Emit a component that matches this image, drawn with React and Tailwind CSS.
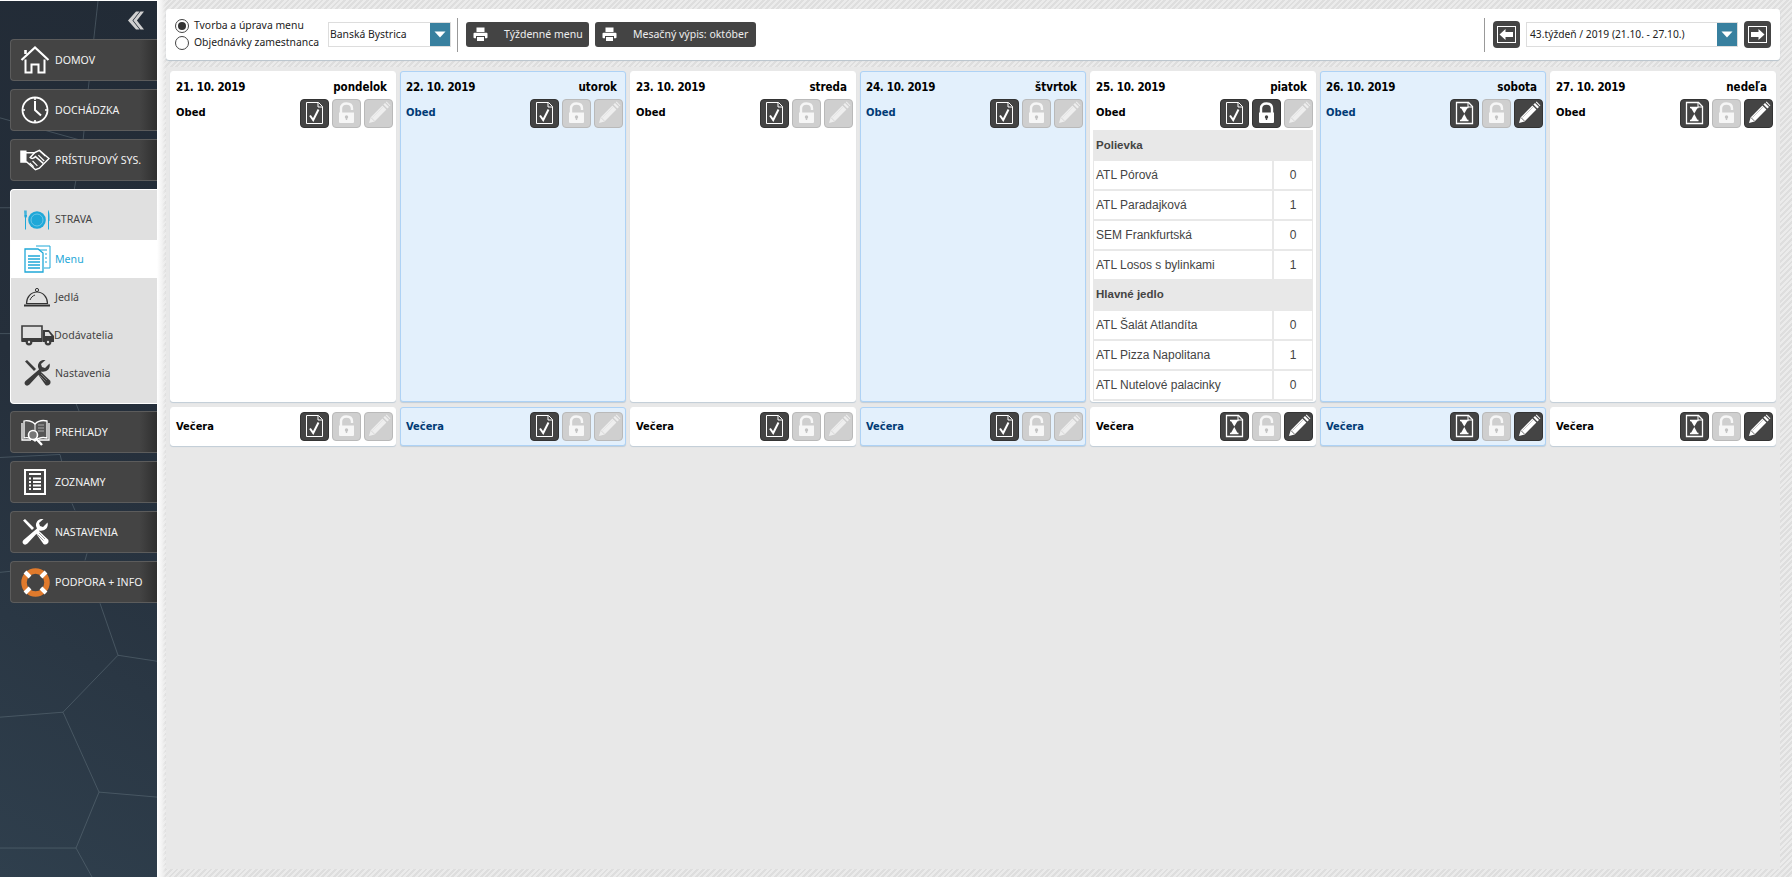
import React from "react";

function DocCheck() {
  return (
    <svg className="shrink-0" width="29" height="29" viewBox="0 0 29 29" fill="none">
      <path d="M6.5 3.5H18.5L22.5 7.5V24.5H6.5Z" stroke="#fff" strokeWidth="1" />
      <path d="M18 3.5V8H22.5" stroke="#fff" strokeWidth="1" />
      <path d="M10 16.5L13.2 21L18.5 10.5" stroke="#fff" strokeWidth="2" />
    </svg>
  );
}
function DocHour() {
  return (
    <svg className="shrink-0" width="29" height="29" viewBox="0 0 29 29" fill="none">
      <path d="M6.5 3.5H18.5L22.5 7.5V24.5H6.5Z" stroke="#fff" strokeWidth="1.3" />
      <path d="M18 3.5V8H22.5" stroke="#fff" strokeWidth="1" />
      <path d="M10 8.5H18.5M10 21.5H18.5" stroke="#fff" strokeWidth="1.5" />
      <path d="M11 9L14.3 14.5L17.5 9Z" fill="#fff" />
      <path d="M11 21L14.3 15L17.5 21Z" fill="#fff" />
    </svg>
  );
}
function LockIcon({ open }) {
  const c = open ? "#f6f6f6" : "#ffffff";
  const k = open ? "#c4c4c4" : "#444444";
  return (
    <svg className="shrink-0" width="29" height="29" viewBox="0 0 29 29" fill="none">
      {open ? (
        <path d="M9 14V9.5C9 6 11.3 4.5 14.5 4.5C17.7 4.5 20 6 20 9.5V11" stroke={c} strokeWidth="2.4" />
      ) : (
        <path d="M9 14V9.5C9 6 11.3 4.5 14.5 4.5C17.7 4.5 20 6 20 9.5V14" stroke={c} strokeWidth="2.4" />
      )}
      <path d="M7 13.5H22V22.5C22 23.5 21.5 24 20.5 24H8.5C7.5 24 7 23.5 7 22.5Z" fill={c} />
      <circle cx="14.5" cy="18" r="1.7" fill={k} />
      <path d="M14.5 18V21" stroke={k} strokeWidth="1.4" />
    </svg>
  );
}
function PencilIcon({ color = "#fff", gap }) {
  return (
    <svg className="shrink-0" width="29" height="29" viewBox="0 0 29 29" fill="none">
      <path d="M5 24L6.6 18.4L18.4 6.6L22.4 10.6L10.6 22.4Z" fill={color} />
      <path d="M6.8 18.4L10.6 22.2" stroke={gap} strokeWidth="0.8" />
      <path d="M8.5 18.5L19.5 7.5" stroke={gap} strokeWidth="0.5" opacity="0.6" />
      <path d="M19.4 5.6L21 4L25 8L23.4 9.6Z" fill={color} />
      <path d="M21.8 3.2L22.6 2.6L26.4 6.4L25.8 7.2Z" fill={color} />
    </svg>
  );
}

function Tool({ on, children }) {
  return (
    <span
      className={
        on
          ? "flex h-[29px] w-[29px] items-center justify-center rounded-[4px] border border-[#333333] bg-[#444444]"
          : "flex h-[29px] w-[29px] items-center justify-center rounded-[4px] border border-[#b9b9b9] bg-[#cfcfcf]"
      }
    >
      {children}
    </span>
  );
}

function Tools({ doc, lock, pencil }) {
  return (
    <div className="flex gap-[3px]">
      <Tool on>{doc === "check" ? <DocCheck /> : <DocHour />}</Tool>
      <Tool on={lock}>
        <LockIcon open={!lock} />
      </Tool>
      <Tool on={pencil}>
        {pencil ? <PencilIcon color="#ffffff" gap="#444444" /> : <PencilIcon color="#eeeeee" gap="#cfcfcf" />}
      </Tool>
    </div>
  );
}

function PrintIcon() {
  return (
    <svg width="15" height="15" viewBox="0 0 15 15" fill="#fff">
      <rect x="3.5" y="0.5" width="8" height="4.5" />
      <rect x="0.5" y="5.8" width="14" height="5.5" rx="1" />
      <rect x="3.5" y="9.5" width="8" height="5" stroke="#444" strokeWidth="1" />
    </svg>
  );
}

function ArrowBtn({ dir }) {
  return (
    <span className="flex h-[27px] w-[27px] items-center justify-center rounded-[4px] bg-[#444444]">
      <svg width="21" height="21" viewBox="0 0 21 21" fill="none">
        <rect x="1.5" y="2.5" width="18" height="16" stroke="#fff" strokeWidth="1" />
        <path
          d={dir === "left" ? "M3.5 10.5L9.5 5V8H17V13H9.5V16Z" : "M17.5 10.5L11.5 5V8H4V13H11.5V16Z"}
          fill="#fff"
        />
      </svg>
    </span>
  );
}

function DropArrow() {
  return (
    <span className="flex h-full w-[20px] items-center justify-center bg-[#38809f]">
      <svg width="12" height="7" viewBox="0 0 12 7">
        <path d="M0.5 0.5H11.5L6 6.5Z" fill="#fff" />
      </svg>
    </span>
  );
}

function Radio({ on, label }) {
  return (
    <label className="flex h-[17px] items-center">
      <span className="flex h-[14px] w-[14px] items-center justify-center rounded-full border border-[#444444] bg-white">
        {on && <span className="h-[8px] w-[8px] rounded-full bg-[#333333]" />}
      </span>
      <span className="ml-[5px] text-[10.4px] text-[#222222]">{label}</span>
    </label>
  );
}

function PrintBtn({ width, label }) {
  return (
    <span className={`flex h-[25px] items-center rounded-[3px] bg-[#444444] pl-[7px] text-[10.5px] text-[#eeeeee] ${width}`}>
      <PrintIcon />
      <span className="ml-[16px]">{label}</span>
    </span>
  );
}

const soups = [
  ["ATL Pórová", 0],
  ["ATL Paradajková", 1],
  ["SEM Frankfurtská", 0],
  ["ATL Losos s bylinkami", 1],
];
const mains = [
  ["ATL Šalát Atlandíta", 0],
  ["ATL Pizza Napolitana", 1],
  ["ATL Nutelové palacinky", 0],
];

function Row({ name, n, last }) {
  return (
    <div
      className={
        last
          ? "flex h-[28px] bg-[#e8e8e8] px-[1px] font-['Liberation_Sans',sans-serif] text-[12px] text-[#444444]"
          : "flex h-[30px] border-b-2 border-[#e8e8e8] bg-[#e8e8e8] px-[1px] font-['Liberation_Sans',sans-serif] text-[12px] text-[#444444]"
      }
    >
      <span className="flex w-[178px] items-center bg-white pl-[2px]">{name}</span>
      <span className="ml-[2px] flex w-[38px] items-center justify-center bg-white">{n}</span>
    </div>
  );
}

function SectionHead({ title, tall }) {
  return (
    <div
      className={
        tall
          ? "flex h-[32px] items-center bg-[#e8e8e8] pl-[3px] font-['Liberation_Sans',sans-serif] text-[11.5px] font-bold text-[#444444]"
          : "flex h-[31px] items-center bg-[#e8e8e8] pl-[3px] font-['Liberation_Sans',sans-serif] text-[11.5px] font-bold text-[#444444]"
      }
    >
      {title}
    </div>
  );
}

const days = [
  { date: "21. 10. 2019", day: "pondelok", blue: false, o: ["check", false, false], v: ["check", false, false] },
  { date: "22. 10. 2019", day: "utorok", blue: true, o: ["check", false, false], v: ["check", false, false] },
  { date: "23. 10. 2019", day: "streda", blue: false, o: ["check", false, false], v: ["check", false, false] },
  { date: "24. 10. 2019", day: "štvrtok", blue: true, o: ["check", false, false], v: ["check", false, false] },
  { date: "25. 10. 2019", day: "piatok", blue: false, o: ["check", true, false], v: ["hour", false, true], menu: true },
  { date: "26. 10. 2019", day: "sobota", blue: true, o: ["hour", false, true], v: ["hour", false, true] },
  { date: "27. 10. 2019", day: "nedeľa", blue: false, o: ["hour", false, true], v: ["hour", false, true] },
];

function HomeIcon() {
  return (
    <svg width="30" height="30" viewBox="0 0 30 30" fill="none" stroke="#fff">
      <path d="M1.5 15L15 2.5L28.5 15" strokeWidth="2.2" />
      <path d="M5.5 5V9" strokeWidth="2.6" />
      <path d="M5.5 14.5V27.5H11.5V19.5H18.5V27.5H24.5V14.5" strokeWidth="2" />
    </svg>
  );
}
function ClockIcon() {
  return (
    <svg width="30" height="30" viewBox="0 0 30 30" fill="none" stroke="#fff">
      <circle cx="15" cy="15" r="12.5" strokeWidth="1.8" />
      <path d="M15 6V15L21 20.5" strokeWidth="2" />
      <path d="M15 3V5M15 25V27M3 15H5M25 15H27" strokeWidth="1.6" />
    </svg>
  );
}
function HandIcon() {
  return (
    <svg width="31" height="22" viewBox="0 0 31 22" fill="none" stroke="#fff" strokeWidth="1.5">
      <path d="M1 2H6V13H1Z" fill="#fff" />
      <path d="M6 3.5H15L20 1L30 9.5L20 19.5L16 21L7 13H6" />
      <path d="M15 3.5L10.5 8.5C12 10 14 9.5 16 7.5L24 14.5" />
      <path d="M20 1L26 7M19 6L25 12M10 14L14 18M13 12L18 17" strokeWidth="1.2" />
    </svg>
  );
}
function PlateIcon() {
  return (
    <svg width="26" height="20" viewBox="0 0 26 20" fill="#1fa8d8">
      <circle cx="13" cy="10" r="8.8" />
      <circle cx="13" cy="10" r="6" fill="none" stroke="#7fcdea" strokeWidth="0.8" />
      <path d="M0 0.5C0 0.5 0.3 4 0.3 5.5C0.3 7 0.9 7.5 1 8V19.5H2V8C2.4 7.5 3 7 3 5.5V0.5H2.4V5H2V0.5H1.2V5H0.8V0.5Z" />
      <path d="M24 0C24 0 25.5 1 25.5 6V11H25V19.5H24Z" />
    </svg>
  );
}
function DocsIcon() {
  return (
    <svg width="27" height="28" viewBox="0 0 27 28" fill="none" stroke="#1fa8d8">
      <path d="M12 1H26V23H20" strokeWidth="1" />
      <path d="M14 5H23M21 9H23M21 13H23M21 17H23" strokeWidth="1" />
      <path d="M1 4H14L19 8V27H1Z" fill="#fff" strokeWidth="1.3" />
      <path d="M4 11H16M4 14H16M4 17H16M4 20H16M4 23H16" strokeWidth="1.3" />
    </svg>
  );
}
function ClocheIcon() {
  return (
    <svg width="28" height="20" viewBox="0 0 28 20" fill="none" stroke="#333333">
      <path d="M1 18.5H27" strokeWidth="2" />
      <path d="M3.5 16.5C3.5 10 8 5 14 5C20 5 24.5 10 24.5 16.5Z" strokeWidth="1.2" />
      <circle cx="14" cy="3" r="1.6" strokeWidth="1" />
      <path d="M7 13C8 10.5 9.5 9 12 8" strokeWidth="1" />
    </svg>
  );
}
function TruckIcon() {
  return (
    <svg width="33" height="21" viewBox="0 0 33 21" fill="#3c3c3c">
      <path d="M1 1H21V16H1Z" fill="none" stroke="#3c3c3c" strokeWidth="1.6" />
      <path d="M1 13H21V17H1Z" />
      <path d="M22 5H28L33 11V17H22Z" />
      <path d="M24 7H27.5L30.5 11H24Z" fill="#e0e0e0" />
      <circle cx="8" cy="17" r="3.4" />
      <circle cx="8" cy="17" r="1.2" fill="#e0e0e0" />
      <circle cx="27" cy="17" r="3.4" />
      <circle cx="27" cy="17" r="1.2" fill="#e0e0e0" />
    </svg>
  );
}
function WrenchIcon({ color }) {
  return (
    <svg width="27" height="26" viewBox="0 0 27 26" fill={color}>
      <path d="M25.5 3.5L21 8L18 7L17 4L21.5 0C17.5 -0.8 13.5 2.5 14 7L15 9.5L1.5 21C0 22.5 0.5 24.5 1.8 25.3C3 26 4.5 25.5 5.5 24.5L17.5 11.5C22 12.5 27 9 25.5 3.5Z" />
      <path d="M1 1.5L3 0L12 9L10 11Z" />
      <path d="M13 13L15.5 10.5L26 20.5C27 22 26.5 23.5 25.5 24.5C24.5 25.5 23 26 21.5 25Z" />
      <path d="M17 14L23 20M15.5 15.5L21.5 21.5" stroke="#888" strokeWidth="0.8" />
    </svg>
  );
}
function BookIcon() {
  return (
    <svg width="29" height="27" viewBox="0 0 29 27" fill="none" stroke="#fff">
      <path d="M14 5C11 2 6 1 3 2V19C6 18 11 19 14 22C17 19 22 18 26 19V2C22 1 17 2 14 5Z" strokeWidth="1.3" fill="#555" />
      <path d="M1 4V21H10M28 4V21H18" strokeWidth="1.3" />
      <path d="M14 5V22" strokeWidth="1" />
      <path d="M17 6H23M17 9H23M17 12H23" stroke="#aaa" strokeWidth="1.2" />
      <circle cx="12" cy="16" r="4.5" strokeWidth="1.6" fill="#777" />
      <path d="M15 19.5L21 26" strokeWidth="2.4" />
    </svg>
  );
}
function ListIcon() {
  return (
    <svg width="22" height="26" viewBox="0 0 22 26" fill="none">
      <rect x="1" y="1" width="20" height="24" stroke="#fff" strokeWidth="2" fill="#444" />
      <path d="M5 5H17" stroke="#fff" strokeWidth="2" />
      <path d="M5 9.5H7M9 9.5H17M5 13H7M9 13H17M5 16.5H7M9 16.5H17M5 20H7M9 20H17" stroke="#fff" strokeWidth="2" />
    </svg>
  );
}
function BuoyIcon() {
  return (
    <svg width="29" height="29" viewBox="0 0 29 29" fill="none">
      <circle cx="14.5" cy="14.5" r="11.5" stroke="#e07a2c" strokeWidth="5.5" />
      <path d="M4 4L9 9M25 4L20 9M4 25L9 20M25 25L20 20" stroke="#fff" strokeWidth="4" />
    </svg>
  );
}

function NavButton({ icon, label }) {
  return (
    <div className="flex h-[42px] items-center rounded-l-[4px] border border-r-0 border-[#5c5c5c] bg-[linear-gradient(90deg,#444444_0%,#444444_88%,#2f2f2f_100%)] pl-[9px] text-[10.6px] text-[#f2f2f2]">
      <span className="flex w-[30px] items-center justify-center">{icon}</span>
      <span className="ml-[5px] pt-[1px]">{label}</span>
    </div>
  );
}

function SubItem({ icon, label, active, shift }) {
  return (
    <div
      className={
        active
          ? "flex h-[38px] items-center bg-white pl-[9px] text-[10.6px] text-[#1fa8d8]"
          : "flex h-[38px] items-center pl-[9px] text-[10.6px] text-[#444444]"
      }
    >
      <span className="flex w-[34px] items-center justify-center">{icon}</span>
      <span className={shift ? "ml-[1px] pt-[1px]" : "pt-[1px]"}>{label}</span>
    </div>
  );
}

function HexLines() {
  return (
    <svg className="absolute inset-0 h-full w-full" viewBox="0 0 157 877" preserveAspectRatio="none" fill="none" stroke="#64747f" strokeWidth="1" strokeOpacity="0.5">
      <path d="M98 0L88 90L83 140L74 190" />
      <path d="M0 117L83 140L157 162" />
      <path d="M0 207H10" />
      <path d="M0 333H10M76 403L80 413M0 457L60 454L62 462M72 503L75 510M87 553L85 560M0 572L10 571" />
      <path d="M100 603L118 655L157 661M118 655L63 712L0 717M63 712L99 792L157 797M99 792L76 848L0 848M76 848L92 877" />
    </svg>
  );
}

const dayFont = "font-['DejaVu_Sans_Condensed','Noto_Sans',sans-serif] font-bold";

export default function App() {
  return (
    <div className="flex h-[877px] w-[1792px] overflow-hidden font-['Noto_Sans',sans-serif]">
      <aside className="relative w-[157px] shrink-0 border-t border-white bg-[linear-gradient(30deg,#2f3f4d_0%,#252f3b_55%,#222b36_100%)] pl-[10px]">
        <HexLines />
        <div className="relative">
          <div className="flex h-[38px] items-center justify-end pr-[13px]">
            <svg width="16" height="19" viewBox="0 0 18 20" fill="#d0d0d0">
              <path d="M9 0L0 10L9 20H13L5 10L13 0Z" />
              <path d="M14 0L6 10L14 20H18L10 10L18 0Z" />
            </svg>
          </div>
          <div className="flex flex-col gap-[8px]">
            <NavButton icon={<HomeIcon />} label="DOMOV" />
            <NavButton icon={<ClockIcon />} label="DOCHÁDZKA" />
            <NavButton icon={<HandIcon />} label="PRÍSTUPOVÝ SYS." />
            <div className="h-[214px] rounded-l-[4px] border-t border-l border-white bg-[#e0e0e0] shadow-[0_1px_0_#fff]">
              <div className="flex h-[50px] items-center pl-[12px] pt-[10px] text-[10.6px] text-[#444444]">
                <span className="flex w-[28px] items-center justify-center"><PlateIcon /></span>
                <span className="ml-[4px]">STRAVA</span>
              </div>
              <SubItem active shift icon={<DocsIcon />} label="Menu" />
              <SubItem shift icon={<ClocheIcon />} label="Jedlá" />
              <SubItem icon={<TruckIcon />} label="Dodávatelia" />
              <SubItem shift icon={<WrenchIcon color="#3c3c3c" />} label="Nastavenia" />
            </div>
            <NavButton icon={<BookIcon />} label="PREHĽADY" />
            <NavButton icon={<ListIcon />} label="ZOZNAMY" />
            <NavButton icon={<WrenchIcon color="#ffffff" />} label="NASTAVENIA" />
            <NavButton icon={<BuoyIcon />} label="PODPORA + INFO" />
          </div>
        </div>
      </aside>

      <main className="flex min-w-0 flex-1 flex-col bg-[linear-gradient(90deg,#ffffff_0px,#f2f2f2_5px,transparent_9px),repeating-linear-gradient(135deg,#dedede_0px,#dedede_2px,#ebebeb_2px,#ebebeb_4px)] pb-[8px] pl-[9px] pr-[12px] pt-[9px]">
        <div className="flex h-[51px] shrink-0 items-center rounded-[3px] bg-white pl-[9px] pr-[9px] shadow-[0_1px_1px_#b8c4cc]">
          <div className="flex w-[153px] flex-col">
            <Radio on label="Tvorba a úprava menu" />
            <Radio label="Objednávky zamestnanca" />
          </div>
          <div className="flex h-[25px] w-[123px] items-center justify-between border border-[#dddddd] pl-[1px] text-[10.4px] text-[#222222]">
            <span>Banská Bystrica</span>
            <DropArrow />
          </div>
          <div className="ml-[6px] h-[34px] w-[1px] bg-[#999999]" />
          <div className="ml-[8px] flex gap-[6px]">
            <PrintBtn width="w-[123px]" label="Týždenné menu" />
            <PrintBtn width="w-[161px]" label="Mesačný výpis: október" />
          </div>
          <div className="ml-auto h-[34px] w-[1px] bg-[#999999]" />
          <div className="ml-[8px]"><ArrowBtn dir="left" /></div>
          <div className="ml-[6px] flex h-[25px] w-[212px] items-center justify-between border border-[#dddddd] pl-[3px] text-[10.25px] text-[#222222]">
            <span>43.týždeň / 2019 (21.10. - 27.10.)</span>
            <DropArrow />
          </div>
          <div className="ml-[6px]"><ArrowBtn dir="right" /></div>
        </div>

        <div className="mt-[7px] flex-1 bg-[#e8e8e8] pl-[4px] pt-[4px]">
          <div className="grid grid-cols-[repeat(7,226px)] grid-rows-[331px_39px] gap-x-[4px] gap-y-[5px]">
            {days.map((d) => (
              <div
                key={d.date}
                className={
                  d.blue
                    ? "rounded-[3px] border border-[#aed2f5] bg-[#e3f0fc] px-[1px] shadow-[0_1px_1px_#c0ccd6]"
                    : "rounded-[3px] border border-white bg-white px-[1px] shadow-[0_1px_1px_#c0ccd6]"
                }
              >
                <div className={`flex h-[24px] items-end justify-between pl-[4px] pr-[7px] text-[11.5px] text-black ${dayFont}`}>
                  <span className="tracking-[-0.3px]">{d.date}</span>
                  <span>{d.day}</span>
                </div>
                <div className="flex h-[33px] items-center justify-between pl-[4px] pr-[1px] pt-[2px]">
                  <span className={d.blue ? `text-[11.1px] text-[#003a75] ${dayFont}` : `text-[11.1px] text-black ${dayFont}`}>
                    Obed
                  </span>
                  <Tools doc={d.o[0]} lock={d.o[1]} pencil={d.o[2]} />
                </div>
                {d.menu && (
                  <div className="mt-[1px] pl-[1px] pr-[1px]">
                    <SectionHead title="Polievka" />
                    {soups.map(([name, n], i) => (
                      <Row key={name} name={name} n={n} last={i === soups.length - 1} />
                    ))}
                    <SectionHead tall title="Hlavné jedlo" />
                    {mains.map(([name, n]) => (
                      <Row key={name} name={name} n={n} />
                    ))}
                  </div>
                )}
              </div>
            ))}
            {days.map((d) => (
              <div
                key={d.date}
                className={
                  d.blue
                    ? "flex items-center justify-between rounded-[3px] border border-[#aed2f5] bg-[#e3f0fc] pl-[5px] pr-[2px] shadow-[0_1px_1px_#c0ccd6]"
                    : "flex items-center justify-between rounded-[3px] border border-white bg-white pl-[5px] pr-[2px] shadow-[0_1px_1px_#c0ccd6]"
                }
              >
                <span className={d.blue ? `pt-[1px] text-[11px] text-[#003a75] ${dayFont}` : `pt-[1px] text-[11px] text-black ${dayFont}`}>
                  Večera
                </span>
                <Tools doc={d.v[0]} lock={d.v[1]} pencil={d.v[2]} />
              </div>
            ))}
          </div>
        </div>
      </main>
    </div>
  );
}
